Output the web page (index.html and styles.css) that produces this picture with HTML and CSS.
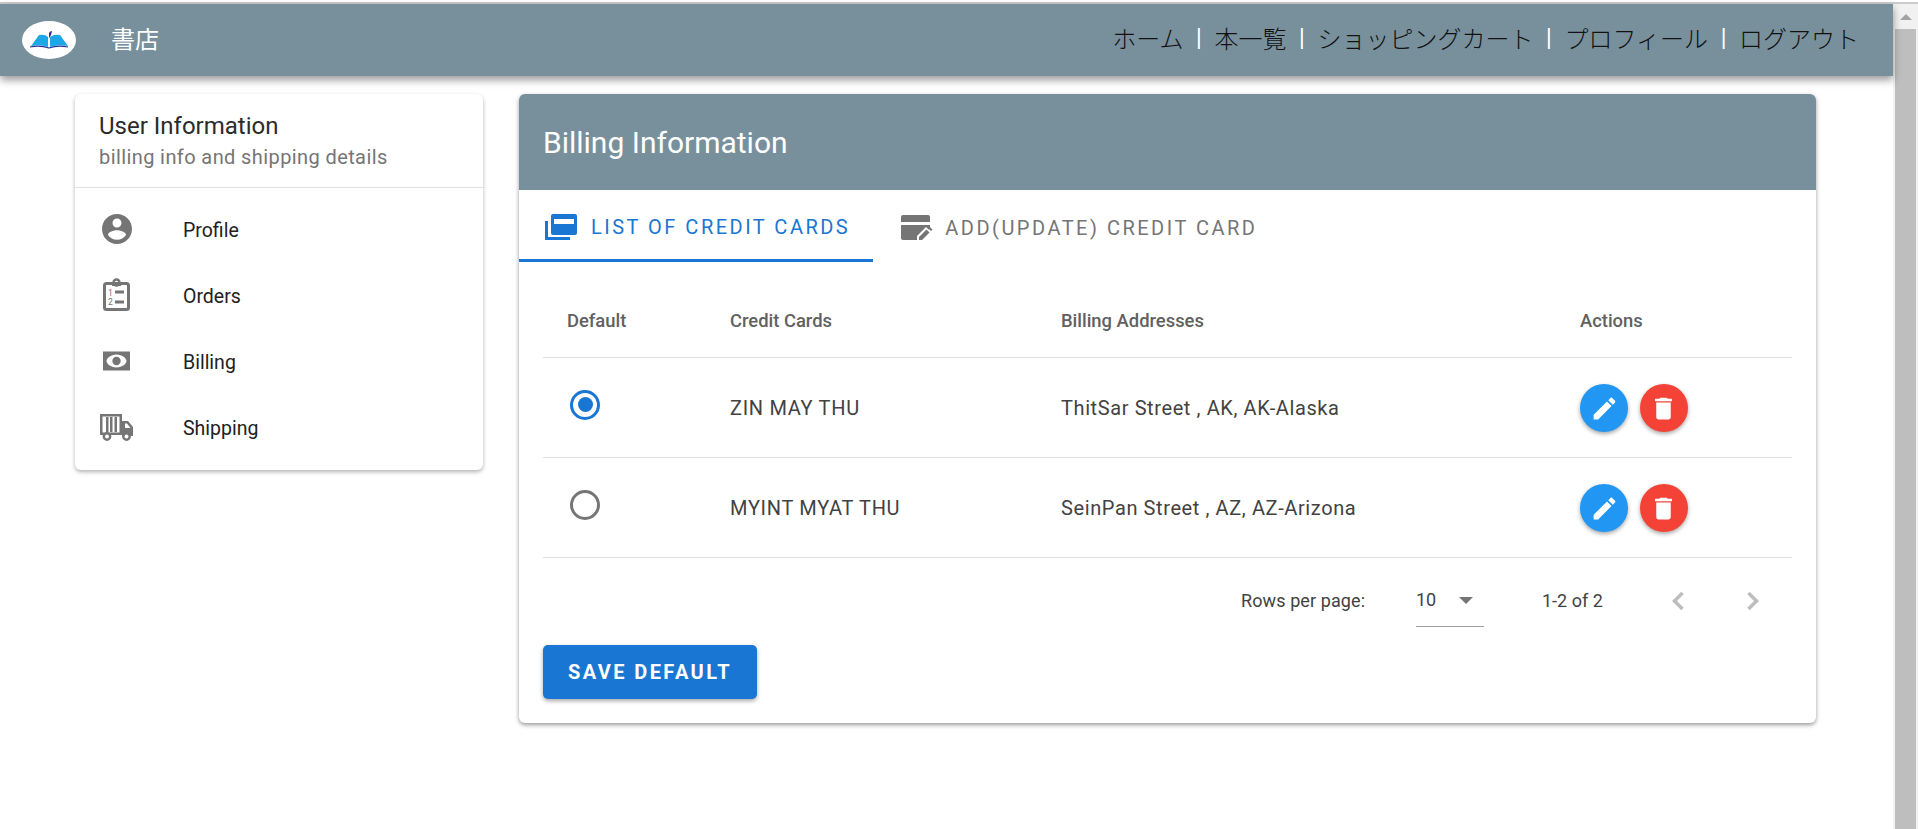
FILE: index.html
```html
<!DOCTYPE html>
<html lang="ja">
<head>
    <meta charset="UTF-8">
    <meta name="viewport" content="width=device-width, initial-scale=1.0">
    <title>書店</title>
    <link rel="stylesheet" href="styles.css">
</head>
<body>
    <div class="top-line"></div>
    <div class="window">
        <div class="page">
            <header class="app-bar">
                <div class="brand">
                    <svg class="logo" width="54" height="38" viewBox="0 0 54 38">
                        <ellipse cx="27" cy="19" rx="27" ry="19" fill="#fff"/>
                        <path d="M9 25 L17 14 Q23 13 26 16 V26 Q18 23 9 25Z" fill="#1ba7e8"/>
                        <path d="M46 25 L38 14 Q32 13 28 16 V26 Q37 23 46 25Z" fill="#1ba7e8"/>
                        <path d="M8 26 Q18 24 27 27 Q36 24 46 26" fill="none" stroke="#2e3192" stroke-width="1.2"/>
                        <path d="M27 17 V12 Q28 10 30 10 L29 14 Q28 16 27 17Z" fill="#2e3192"/>
                    </svg>
                    <span class="brand-name">書店</span>
                </div>
                <nav class="nav">
                    <a>ホーム</a><span class="sep">|</span>
                    <a>本一覧</a><span class="sep">|</span>
                    <a>ショッピングカート</a><span class="sep">|</span>
                    <a>プロフィール</a><span class="sep">|</span>
                    <a>ログアウト</a>
                </nav>
            </header>

            <main class="content">
                <aside class="side-card">
                    <div class="side-head">
                        <h2>User Information</h2>
                        <p>billing info and shipping details</p>
                    </div>
                    <ul class="side-list">
                        <li>
                            <svg class="side-icon" viewBox="0 0 24 24"><path d="M12 2C6.48 2 2 6.48 2 12s4.48 10 10 10 10-4.48 10-10S17.52 2 12 2zm0 3c1.66 0 3 1.34 3 3s-1.34 3-3 3-3-1.34-3-3 1.34-3 3-3zm0 14.2c-2.5 0-4.71-1.28-6-3.22.03-1.99 4-3.08 6-3.08 1.99 0 5.97 1.09 6 3.08-1.29 1.94-3.5 3.22-6 3.22z"/></svg>
                            <span>Profile</span>
                        </li>
                        <li>
                            <svg class="side-icon" viewBox="0 0 36 36">
                                <rect x="5.5" y="6.5" width="24" height="26" rx="2" fill="none" stroke="#757575" stroke-width="3"/>
                                <circle cx="17.5" cy="5.5" r="3" fill="none" stroke="#757575" stroke-width="2.4"/>
                                <rect x="13" y="6" width="9" height="3" fill="#757575"/>
                                <text x="9" y="18.5" class="list-num">1</text>
                                <text x="9" y="28" class="list-num">2</text>
                                <rect x="16" y="13.5" width="9" height="3" fill="#757575"/>
                                <rect x="16" y="23.5" width="9" height="3" fill="#757575"/>
                            </svg>
                            <span>Orders</span>
                        </li>
                        <li>
                            <svg class="side-icon" viewBox="0 0 36 36">
                                <path fill-rule="evenodd" d="M4 8.5h27v19H4zM17.5 11.5c-6 0-10 4-10 6.500s4 6.500 10 6.500 10-4 10-6.500-4-6.500-10-6.500z"/>
                                <circle cx="17.5" cy="18" r="4.200"/>
                            </svg>
                            <span>Billing</span>
                        </li>
                        <li>
                            <svg class="side-icon" viewBox="0 0 36 36">
                                <path fill-rule="evenodd" d="M1 5h22v21H1zM3.500 7.500v16h17v-16z"/>
                                <path d="M7 8h2.500v15H7zM11 8h2.500v15H11zM15.500 8H18v15h-2.500z"/>
                                <path d="M23 12h6l5 6v9H23zM26 14.500V19h5.500l-3.500-4.500z" fill-rule="evenodd"/>
                                <circle cx="8" cy="27.500" r="3.200" fill="#fff" stroke="#757575" stroke-width="2.400"/>
                                <circle cx="27.500" cy="27.500" r="3.200" fill="#fff" stroke="#757575" stroke-width="2.400"/>
                            </svg>
                            <span>Shipping</span>
                        </li>
                    </ul>
                </aside>

                <section class="main-card">
                    <div class="main-head">Billing Information</div>
                    <div class="tabs">
                        <div class="tab active">
                            <svg class="tab-icon" viewBox="0 0 32 26" width="32" height="26">
                                <path fill-rule="evenodd" d="M8 0h22a2 2 0 0 1 2 2v17a2 2 0 0 1-2 2H8a2 2 0 0 1-2-2V2a2 2 0 0 1 2-2zM9 5v5h20V5z"/>
                                <path d="M1.500 7v17.500H25" fill="none" stroke="#1976d2" stroke-width="3"/>
                            </svg>
                            <span>LIST OF CREDIT CARDS</span>
                        </div>
                        <div class="tab">
                            <svg class="tab-icon" viewBox="0 0 32 26" width="32" height="26">
                                <path fill-rule="evenodd" d="M2 0h25a2 2 0 0 1 2 2v5H0V2a2 2 0 0 1 2-2zM0 10h29v3l-9 12H2a2 2 0 0 1-2-2z"/>
                                <path d="M16 26v-5l9-9 5 5-9 9z" fill="#fff"/>
                                <path d="M18 25v-3l7.500-7.500 3 3L21 25zM27 13l1.500-1.500 3 3L30 16z"/>
                            </svg>
                            <span>ADD(UPDATE) CREDIT CARD</span>
                        </div>
                    </div>

                    <div class="tab-body">
                        <table class="cards-table">
                            <thead>
                                <tr>
                                    <th class="col-default">Default</th>
                                    <th class="col-card">Credit Cards</th>
                                    <th class="col-address">Billing Addresses</th>
                                    <th>Actions</th>
                                </tr>
                            </thead>
                            <tbody>
                                <tr>
                                    <td><span class="radio checked"></span></td>
                                    <td class="card-name">ZIN MAY THU</td>
                                    <td>ThitSar Street , AK, AK-Alaska</td>
                                    <td class="actions">
                                        <button class="fab fab-edit"><svg viewBox="0 0 24 24"><path d="M3 17.250V21h3.750L17.810 9.940l-3.750-3.750L3 17.250zM20.710 7.040c.39-.39.39-1.020 0-1.410l-2.340-2.340c-.39-.39-1.020-.39-1.410 0l-1.830 1.830 3.750 3.750 1.830-1.830z"/></svg></button>
                                        <button class="fab fab-delete"><svg viewBox="0 0 24 24"><path d="M6 19c0 1.100.9 2 2 2h8c1.100 0 2-.9 2-2V7H6v12zM19 4h-3.500l-1-1h-5l-1 1H5v2h14V4z"/></svg></button>
                                    </td>
                                </tr>
                                <tr>
                                    <td><span class="radio"></span></td>
                                    <td class="card-name">MYINT MYAT THU</td>
                                    <td>SeinPan Street , AZ, AZ-Arizona</td>
                                    <td class="actions">
                                        <button class="fab fab-edit"><svg viewBox="0 0 24 24"><path d="M3 17.250V21h3.750L17.810 9.940l-3.750-3.750L3 17.250zM20.710 7.040c.39-.39.39-1.020 0-1.410l-2.340-2.340c-.39-.39-1.020-.39-1.410 0l-1.830 1.830 3.750 3.750 1.830-1.830z"/></svg></button>
                                        <button class="fab fab-delete"><svg viewBox="0 0 24 24"><path d="M6 19c0 1.100.9 2 2 2h8c1.100 0 2-.9 2-2V7H6v12zM19 4h-3.500l-1-1h-5l-1 1H5v2h14V4z"/></svg></button>
                                    </td>
                                </tr>
                            </tbody>
                        </table>

                        <div class="pagination">
                            <span class="rows-label">Rows per page:</span>
                            <div class="rows-select">
                                <span>10</span>
                                <span class="select-arrow"></span>
                            </div>
                            <span class="range">1-2 of 2</span>
                            <svg class="page-arrow" viewBox="0 0 14 20"><path d="M11.500 2L3.500 10l8 8" /></svg>
                            <svg class="page-arrow" viewBox="0 0 14 20"><path d="M2.500 2l8 8-8 8" /></svg>
                        </div>

                        <button class="save-btn">SAVE DEFAULT</button>
                    </div>
                </section>
            </main>
        </div>

        <div class="scrollbar">
            <div class="scroll-up"></div>
            <div class="scroll-thumb"></div>
        </div>
    </div>
</body>
</html>
```

FILE: styles.css
```css
* {
    margin: 0;
    padding: 0;
    box-sizing: border-box;
    font-family: Roboto, "Noto Sans CJK JP", sans-serif;
}

html, body {
    height: 100%;
    overflow: hidden;
    background-color: white;
}

.top-line {
    height: 4px;
    border-top: 2px solid white;
    background-color: #ccc;
}

.window {
    display: flex;
    height: 825px;
}

.page {
    flex: 1;
    min-width: 0;
}

/* app bar */
.app-bar {
    display: flex;
    justify-content: space-between;
    align-items: center;
    height: 72px;
    padding: 0 34px 0 22px;
    background-color: #78909c;
    box-shadow: 0 4px 8px rgba(0,0,0,0.4);
    position: relative;
}

.brand {
    display: flex;
    align-items: center;
    gap: 35px;
}

.logo {
    display: block;
}

.brand-name {
    padding-bottom: 6px;
    color: white;
    font-size: 24px;
    font-family: "Noto Sans CJK JP", sans-serif;
}

.nav {
    display: flex;
    align-items: center;
    padding-bottom: 6px;
    font-size: 24px;
    font-weight: 300;
    color: #111;
}

.nav a {
    font-family: "Noto Sans CJK JP", sans-serif;
    font-weight: 300;
}

.nav .sep {
    width: 31px;
    text-align: center;
    color: white;
    font-size: 22px;
    font-family: "Liberation Sans", sans-serif;
}

/* two cards */
.content {
    display: flex;
    align-items: flex-start;
    gap: 36px;
    padding: 18px 0 0 75px;
}

.side-card {
    width: 408px;
    height: 376px;
    background: white;
    border-radius: 6px;
    box-shadow: 0 2px 4px rgba(0,0,0,0.3);
}

.side-head {
    height: 94px;
    padding: 16px 24px 0;
    border-bottom: 1px solid #e0e0e0;
}

.side-head h2 {
    font-size: 24px;
    font-weight: 400;
    line-height: 32px;
    color: #2b2b2b;
}

.side-head p {
    font-size: 20px;
    line-height: 30px;
    letter-spacing: 0.4px;
    color: #757575;
}

.side-list {
    list-style: none;
    padding: 8px 0 8px 24px;
}

.side-list li {
    display: flex;
    align-items: center;
    height: 66px;
    font-size: 19.5px;
    color: #212121;
}

.side-list span {
    padding-top: 2px;
}

.side-icon {
    width: 36px;
    height: 36px;
    margin-right: 48px;
    fill: #757575;
}

.list-num {
    font-size: 8.5px;
    fill: #757575;
}

.main-card {
    width: 1297px;
    height: 629px;
    background: white;
    border-radius: 6px;
    box-shadow: 0 2px 4px rgba(0,0,0,0.4);
}

.main-head {
    height: 96px;
    padding-left: 24px;
    line-height: 98px;
    font-size: 30px;
    color: white;
    background-color: #78909c;
    border-radius: 6px 6px 0 0;
}

.tabs {
    display: flex;
    height: 72px;
}

.tab {
    display: flex;
    align-items: center;
    gap: 12px;
    height: 72px;
    padding: 4px 26px 0 28px;
    font-size: 20px;
    font-weight: 400;
    letter-spacing: 2.5px;
    color: #757575;
}

.tab.active {
    gap: 14px;
    padding: 4px 23px 0 26px;
    color: #1976d2;
    border-bottom: 3px solid #1976d2;
}

.tab-icon {
    fill: #757575;
}

.tab.active .tab-icon {
    fill: #1976d2;
}

.tab-body {
    padding: 0 24px;
}

/* table */
.cards-table {
    width: 100%;
    border-collapse: collapse;
    table-layout: fixed;
    margin-top: 15px;
}

.cards-table th, .cards-table td {
    padding: 0 0 0 24px;
    text-align: left;
    border-bottom: 1px solid #e0e0e0;
}

.cards-table th {
    height: 80px;
    padding-top: 8px;
    font-size: 18.4px;
    font-weight: 500;
    color: #616161;
}

.cards-table td {
    height: 100px;
    padding-top: 2px;
    font-size: 20px;
    letter-spacing: 0.6px;
    color: #424242;
}

.cards-table .card-name {
    letter-spacing: 0.7px;
}

.col-default {
    width: 163px;
}

.col-card {
    width: 331px;
}

.col-address {
    width: 519px;
}

.radio {
    display: block;
    position: relative;
    width: 30px;
    height: 30px;
    margin: 0 0 7px 3px;
    border: 3px solid #757575;
    border-radius: 50%;
}

.radio.checked {
    border-color: #1976d2;
}

.radio.checked::after {
    content: "";
    position: absolute;
    top: 4.5px;
    left: 4.5px;
    width: 15px;
    height: 15px;
    border-radius: 50%;
    background-color: #1976d2;
}

.cards-table .actions {
    font-size: 0;
    white-space: nowrap;
}

.fab {
    display: inline-flex;
    align-items: center;
    justify-content: center;
    width: 48px;
    height: 48px;
    margin-right: 11px;
    border: none;
    border-radius: 50%;
    box-shadow: 0 2px 4px rgba(0,0,0,0.35);
    vertical-align: middle;
}

.fab svg {
    width: 29px;
    height: 29px;
    fill: white;
}

.fab-edit {
    background-color: #2196f3;
}

.fab-delete {
    background-color: #f44336;
}

/* pagination */
.pagination {
    display: flex;
    align-items: center;
    height: 84px;
    padding: 2px 0 0 698px;
    font-size: 18px;
    color: #424242;
}

.rows-label {
    flex: none;
    width: 124px;
    white-space: nowrap;
    letter-spacing: 0.1px;
}

.rows-select {
    flex: none;
    display: flex;
    align-items: center;
    justify-content: space-between;
    width: 68px;
    height: 46px;
    margin: 6px 0 0 51px;
    padding: 0 11px 8px 0;
    border-bottom: 1px solid #9e9e9e;
}

.select-arrow {
    width: 0;
    height: 0;
    margin-top: 2px;
    border-left: 7.5px solid transparent;
    border-right: 7.5px solid transparent;
    border-top: 7.5px solid #757575;
}

.range {
    flex: none;
    margin-left: 58px;
    width: 129px;
}

.page-arrow {
    flex: none;
    width: 14px;
    height: 20px;
    margin-right: 61px;
    fill: none;
    stroke: #bdbdbd;
    stroke-width: 3.5;
}

.save-btn {
    display: block;
    width: 214px;
    height: 54px;
    margin-top: 3px;
    border: none;
    border-radius: 5px;
    background-color: #1976d2;
    color: white;
    font-size: 20px;
    font-weight: 700;
    letter-spacing: 2.4px;
    box-shadow: 0 2px 4px rgba(0,0,0,0.35);
}

/* browser scrollbar */
.scrollbar {
    width: 25px;
    padding: 0 2px;
    background-color: #f1f1f1;
}

.scroll-up {
    display: flex;
    justify-content: center;
    height: 25px;
    padding-top: 10px;
}

.scroll-up::before {
    content: "";
    width: 0;
    height: 0;
    border-left: 6px solid transparent;
    border-right: 6px solid transparent;
    border-bottom: 6px solid #a3a3a3;
}

.scroll-thumb {
    height: 800px;
    background-color: #bebebe;
}
```
